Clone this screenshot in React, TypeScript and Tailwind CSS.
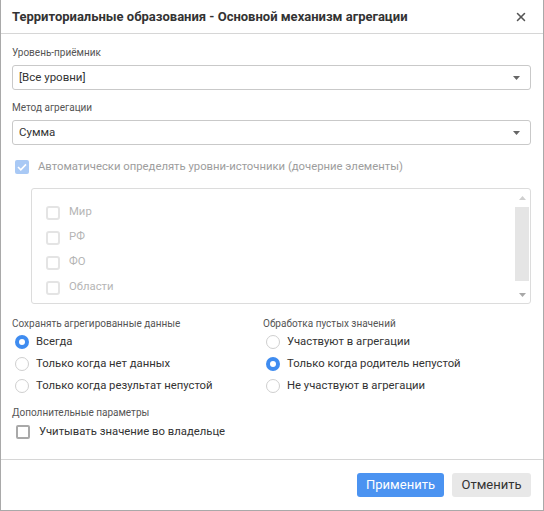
import { X } from 'lucide-react'

const FONT = { fontFamily: 'Roboto, "Noto Sans", sans-serif' }

function Caret() {
  return (
    <svg width="7" height="4" viewBox="0 0 7 4" className="text-[#666]">
      <path d="M0 0h7L3.5 4z" fill="currentColor" />
    </svg>
  )
}

function Select({ value }: { value: string }) {
  return (
    <div className="h-[25px] border border-[#c9c9c9] rounded-[3px] flex items-center justify-between pl-[6px] pr-[10px] text-[11.5px] text-[#333]">
      <span>{value}</span>
      <Caret />
    </div>
  )
}

function Radio({ checked, label }: { checked?: boolean; label: string }) {
  return (
    <div className="h-[22px] flex items-center">
      {checked ? (
        <span className="w-[14px] h-[14px] rounded-full bg-[#3f8cf0] flex items-center justify-center ml-[3px]">
          <span className="w-[6px] h-[6px] rounded-full bg-white" />
        </span>
      ) : (
        <span className="w-[14px] h-[14px] rounded-full border border-[#cfcfcf] ml-[3px]" />
      )}
      <span className="ml-[7px] text-[11.3px] text-[#333]">{label}</span>
    </div>
  )
}

const LEVELS = ['Мир', 'РФ', 'ФО', 'Области']

export default function App() {
  return (
    <div style={FONT} className="w-[544px] h-[511px] bg-white border-x border-b border-[#a9a9a9] flex flex-col">
      <div className="h-[34px] shrink-0 border-b border-[#d6d6d6] flex items-center justify-between pl-[11px] pr-[15px]">
        <span className="text-[13px] font-bold text-[#333]">Территориальные образования - Основной механизм агрегации</span>
        <X size={14} strokeWidth={2.6} className="text-[#555]" />
      </div>

      <div className="flex-1 pl-[11px] pr-[12px] pt-[12px]">
        <div className="text-[10px] leading-[14px] text-[#555]">Уровень-приёмник</div>
        <div className="mt-[5px]">
          <Select value="[Все уровни]" />
        </div>

        <div className="mt-[11px] text-[10px] leading-[14px] text-[#555]">Метод агрегации</div>
        <div className="mt-[5px]">
          <Select value="Сумма" />
        </div>

        <div className="mt-[12px] h-[20px] flex items-center">
          <span className="ml-[3px] w-[14px] h-[14px] rounded-[2px] bg-[#a9c9f5] flex items-center justify-center">
            <svg width="10" height="8" viewBox="0 0 10 8">
              <path d="M1 4l2.8 2.8L9 1.4" stroke="white" strokeWidth="1.6" fill="none" />
            </svg>
          </span>
          <span className="ml-[9px] text-[11.3px] text-[#9d9d9d]">Автоматически определять уровни-источники (дочерние элементы)</span>
        </div>

        <div className="mt-[11px] ml-[19px] h-[116px] border border-[#dcdcdc] rounded-[3px] flex">
          <div className="flex-1 pt-[11px] pl-[14px]">
            {LEVELS.map((l) => (
              <div key={l} className="h-[25px] flex items-center">
                <span className="w-[14px] h-[14px] rounded-[3px] border-2 border-[#e4e4e4]" />
                <span className="ml-[9px] text-[11.3px] text-[#b5b5b5]">{l}</span>
              </div>
            ))}
          </div>
          <div className="w-[14px] mr-[1px] flex flex-col items-center">
            <svg width="7" height="4" viewBox="0 0 7 4" className="mt-[7px] text-[#cfcfcf]">
              <path d="M0 4h7L3.5 0z" fill="currentColor" />
            </svg>
            <div className="mt-[7px] w-full h-[74px] bg-[#e5e5e5]" />
            <div className="flex-1" />
            <svg width="7" height="4" viewBox="0 0 7 4" className="mb-[6px] text-[#a8a8a8]">
              <path d="M0 0h7L3.5 4z" fill="currentColor" />
            </svg>
          </div>
        </div>

        <div className="mt-[13px] grid grid-cols-[251px_1fr]">
          <div>
            <div className="text-[10px] leading-[14px] text-[#555]">Сохранять агрегированные данные</div>
            <Radio checked label="Всегда" />
            <Radio label="Только когда нет данных" />
            <Radio label="Только когда результат непустой" />
          </div>
          <div>
            <div className="text-[10px] leading-[14px] text-[#555]">Обработка пустых значений</div>
            <Radio label="Участвуют в агрегации" />
            <Radio checked label="Только когда родитель непустой" />
            <Radio label="Не участвуют в агрегации" />
          </div>
        </div>

        <div className="mt-[9px] text-[10px] leading-[14px] text-[#555]">Дополнительные параметры</div>
        <div className="h-[24px] flex items-center">
          <span className="ml-[4px] w-[14px] h-[14px] rounded-[2px] border-2 border-[#a9a9a9]" />
          <span className="ml-[9px] text-[11.3px] text-[#333]">Учитывать значение во владельце</span>
        </div>
      </div>

      <div className="h-[51px] shrink-0 border-t border-[#d6d6d6] flex items-center justify-end gap-[8px] pr-[12px]">
        <button className="h-[24px] w-[87px] rounded-[3px] bg-[#4b93f1] text-white text-[13px]">Применить</button>
        <button className="h-[24px] w-[79px] rounded-[3px] bg-[#e8e8e8] text-[#333] text-[13px]">Отменить</button>
      </div>
    </div>
  )
}
